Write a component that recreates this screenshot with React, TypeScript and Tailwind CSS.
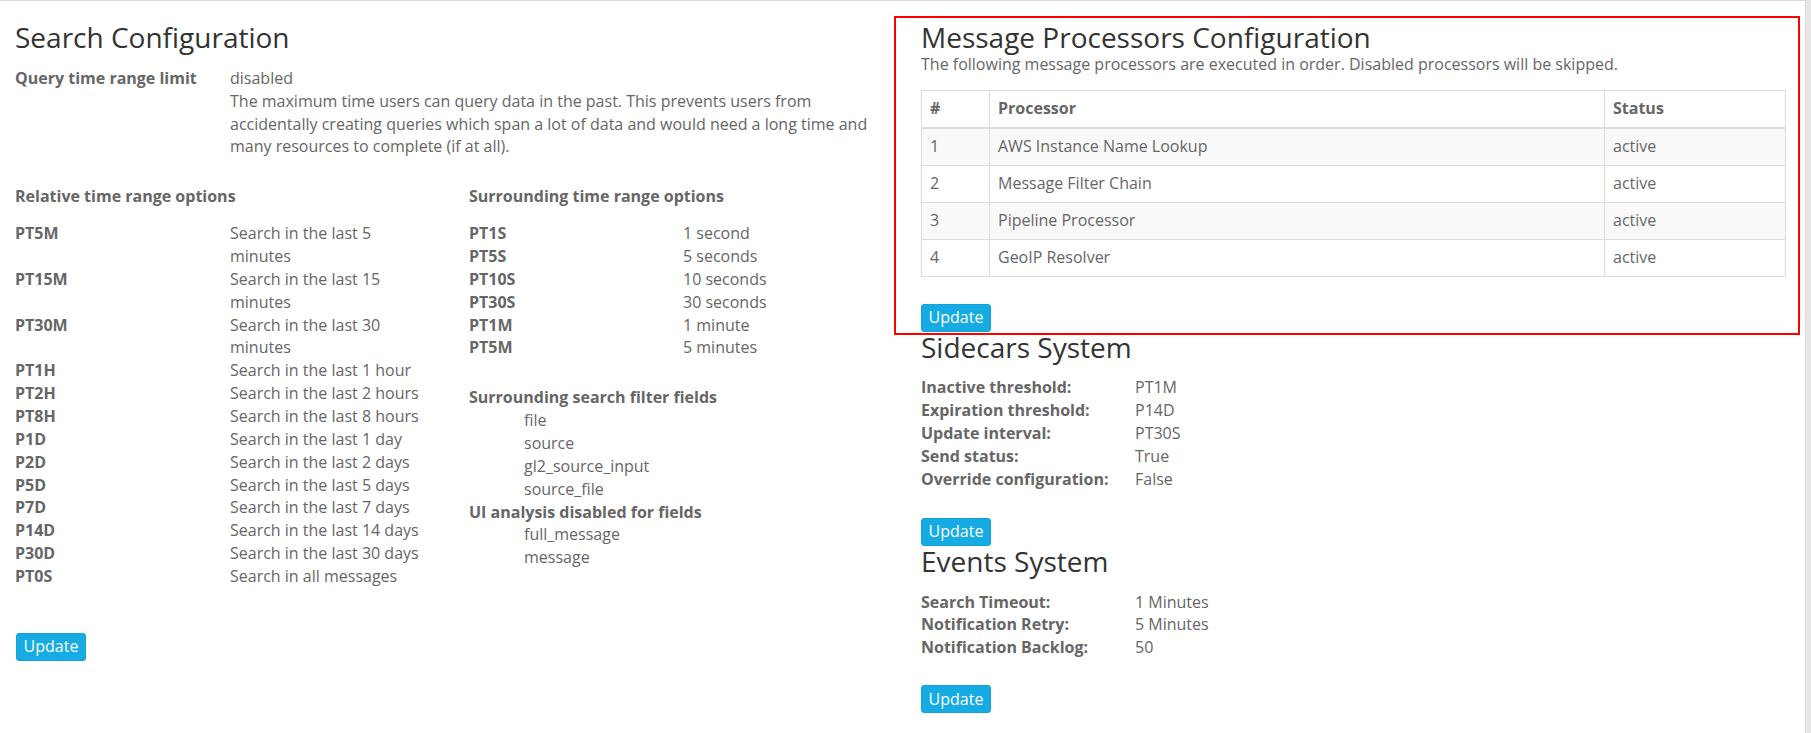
import type { ReactNode } from "react";

const RELATIVE_OPTIONS = [
  ["PT5M", "Search in the last 5 minutes"],
  ["PT15M", "Search in the last 15 minutes"],
  ["PT30M", "Search in the last 30 minutes"],
  ["PT1H", "Search in the last 1 hour"],
  ["PT2H", "Search in the last 2 hours"],
  ["PT8H", "Search in the last 8 hours"],
  ["P1D", "Search in the last 1 day"],
  ["P2D", "Search in the last 2 days"],
  ["P5D", "Search in the last 5 days"],
  ["P7D", "Search in the last 7 days"],
  ["P14D", "Search in the last 14 days"],
  ["P30D", "Search in the last 30 days"],
  ["PT0S", "Search in all messages"],
];

const SURROUNDING_OPTIONS = [
  ["PT1S", "1 second"],
  ["PT5S", "5 seconds"],
  ["PT10S", "10 seconds"],
  ["PT30S", "30 seconds"],
  ["PT1M", "1 minute"],
  ["PT5M", "5 minutes"],
];

const FILTER_FIELDS = ["file", "source", "gl2_source_input", "source_file"];
const UI_DISABLED_FIELDS = ["full_message", "message"];

const PROCESSORS = [
  "AWS Instance Name Lookup",
  "Message Filter Chain",
  "Pipeline Processor",
  "GeoIP Resolver",
];

const SIDECARS = [
  ["Inactive threshold:", "PT1M"],
  ["Expiration threshold:", "P14D"],
  ["Update interval:", "PT30S"],
  ["Send status:", "True"],
  ["Override configuration:", "False"],
];

const EVENTS = [
  ["Search Timeout:", "1 Minutes"],
  ["Notification Retry:", "5 Minutes"],
  ["Notification Backlog:", "50"],
];

function Heading({ children, className = "" }: { children: ReactNode; className?: string }) {
  return (
    <h2 className={`text-[28px] leading-[1.1] font-normal text-[#333] ${className}`}>
      {children}
    </h2>
  );
}

function UpdateButton({ className = "" }: { className?: string }) {
  return (
    <button
      type="button"
      className={`block h-[28px] w-[70px] rounded-[3px] border border-[#15a2d6] bg-[#16ace3] text-center text-[16px] leading-[22.86px] text-white ${className}`}
    >
      Update
    </button>
  );
}

function DefList({ rows, cols }: { rows: string[][]; cols: string }) {
  return (
    <dl className={`grid ${cols}`}>
      {rows.map(([term, value]) => (
        <div key={term} className="contents">
          <dt className="font-bold">{term}</dt>
          <dd>{value}</dd>
        </div>
      ))}
    </dl>
  );
}

function FieldList({ title, fields }: { title: string; fields: string[] }) {
  return (
    <dl>
      <dt className="font-bold">{title}</dt>
      {fields.map((field) => (
        <dd key={field} className="ml-[55px]">
          {field}
        </dd>
      ))}
    </dl>
  );
}

function SearchConfig() {
  return (
    <div>
      <Heading className="mt-[21px] mb-[14px]">Search Configuration</Heading>
      <dl className="grid grid-cols-[215px_1fr]">
        <dt className="font-bold">Query time range limit</dt>
        <dd>
          disabled
          <br />
          The maximum time users can query data in the past. This prevents users
          from accidentally creating queries which span a lot of data and would
          need a long time and many resources to complete (if at all).
        </dd>
      </dl>

      <div className="mt-[27px] grid grid-cols-[421px_419px] gap-x-[33px]">
        <div>
          <p className="font-bold">Relative time range options</p>
          <div className="mt-[14px]">
            <DefList rows={RELATIVE_OPTIONS} cols="grid-cols-[215px_196px]" />
          </div>
        </div>
        <div>
          <p className="font-bold">Surrounding time range options</p>
          <div className="mt-[14px]">
            <DefList rows={SURROUNDING_OPTIONS} cols="grid-cols-[214px_1fr]" />
          </div>
          <div className="mt-[27px]">
            <FieldList title="Surrounding search filter fields" fields={FILTER_FIELDS} />
            <FieldList title="UI analysis disabled for fields" fields={UI_DISABLED_FIELDS} />
          </div>
        </div>
      </div>

      <UpdateButton className="mt-[45px] ml-px" />
    </div>
  );
}

function ProcessorsConfig() {
  return (
    <div>
      <Heading className="mt-[21px]">Message Processors Configuration</Heading>
      <p>
        The following message processors are executed in order. Disabled
        processors will be skipped.
      </p>
      <table className="mt-[14px] w-full border-collapse">
        <thead>
          <tr>
            <th className="h-[38px] w-[68px] border border-b-2 border-[#ddd] px-2 text-left font-bold">
              #
            </th>
            <th className="h-[38px] border border-b-2 border-[#ddd] px-2 text-left font-bold">
              Processor
            </th>
            <th className="h-[38px] w-[181px] border border-b-2 border-[#ddd] px-2 text-left font-bold">
              Status
            </th>
          </tr>
        </thead>
        <tbody>
          {PROCESSORS.map((name, i) => (
            <tr key={name} className={i % 2 === 0 ? "bg-[#f9f9f9]" : ""}>
              <td className="h-[37px] border border-[#ddd] px-2">{i + 1}</td>
              <td className="h-[37px] border border-[#ddd] px-2">{name}</td>
              <td className="h-[37px] border border-[#ddd] px-2">active</td>
            </tr>
          ))}
        </tbody>
      </table>
      <UpdateButton className="mt-[27px]" />

      <Heading className="mb-[14px]">Sidecars System</Heading>
      <DefList rows={SIDECARS} cols="grid-cols-[214px_1fr]" />
      <UpdateButton className="mt-[27px]" />

      <Heading className="mb-[14px]">Events System</Heading>
      <DefList rows={EVENTS} cols="grid-cols-[214px_1fr]" />
      <UpdateButton className="mt-[26px]" />
    </div>
  );
}

export default function App() {
  return (
    <div className="flex h-[733px] w-[1811px] overflow-hidden bg-white font-['Open_Sans',sans-serif] text-[16px] leading-[22.86px] text-[#666]">
      <main className="relative w-[1806px] border-t border-r border-[#d9d9d9]">
        <div className="grid grid-cols-[873px_865px] gap-x-[33px] pl-[15px]">
          <SearchConfig />
          <ProcessorsConfig />
        </div>
        {/* highlight box drawn over the processors section */}
        <div className="pointer-events-none absolute top-[15px] left-[894px] h-[319px] w-[906px] border-2 border-[#ff0000]" />
      </main>
      <div className="flex-1 bg-[#e6e6e6]" />
    </div>
  );
}
